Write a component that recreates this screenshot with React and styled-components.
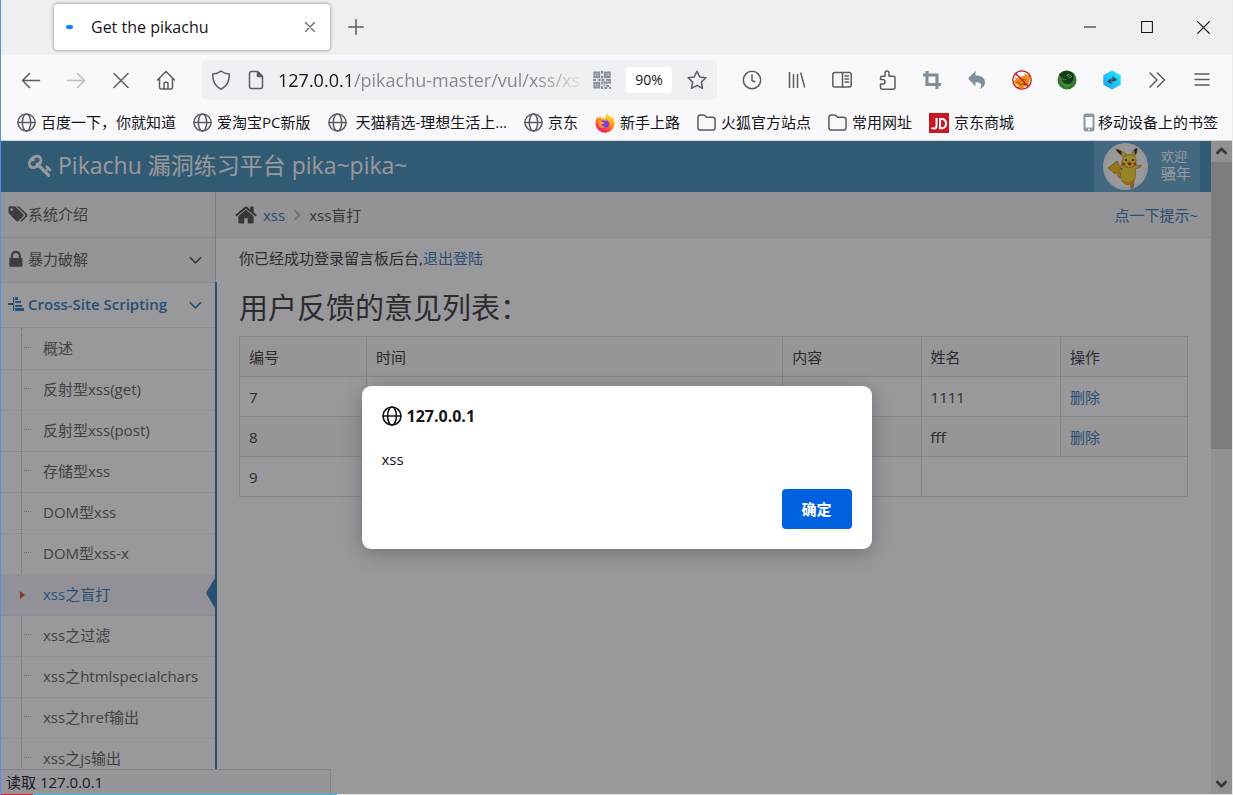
import { useState } from 'react';
import styled, { createGlobalStyle, css } from 'styled-components';

const GlobalStyle = createGlobalStyle`
  * {
    box-sizing: border-box;
  }

  body {
    margin: 0;
    font-family: "Open Sans", "Noto Sans CJK SC", sans-serif;
    font-size: 15px;
    line-height: 20px;
    color: #15141a;
  }

  button, input {
    font: inherit;
  }

  a {
    text-decoration: none;
  }
`;

const Window = styled.div`
  display: flex;
  flex-direction: column;
  height: 100vh;
  overflow: hidden;
  background: #f9f9fb;
  border-left: 1px solid #5a8bf4;
  border-right: 1px solid #e9eaec;
`;

/* browser chrome */

const TabBar = styled.header`
  display: flex;
  align-items: center;
  flex: none;
  height: 55px;
  padding: 0 0 1px 53px;
  background: #efefef;
`;

const Tab = styled.div`
  display: flex;
  align-items: center;
  width: 276px;
  height: 46px;
  padding: 0 8px 0 12px;
  background: #fff;
  border-radius: 4px;
  box-shadow: 0 0 3px 1px rgba(128, 128, 142, 0.6);
`;

const Loader = styled.span`
  width: 7px;
  height: 4px;
  margin-right: 18px;
  border-radius: 2px;
  background: #0a84ff;
`;

const TabTitle = styled.span`
  flex: 1;
  font-size: 16px;
`;

const PlainButton = styled.button`
  display: flex;
  align-items: center;
  justify-content: center;
  padding: 0;
  border: none;
  background: none;
  color: ${props => props.$color || '#5b5b66'};
`;

const TabClose = styled(PlainButton)`
  width: 24px;
  height: 24px;
`;

const NewTab = styled(PlainButton)`
  width: 52px;
  height: 40px;
`;

const WindowButtons = styled.div`
  display: flex;
  margin-left: auto;
`;

const WindowButton = styled(PlainButton)`
  width: 57px;
  height: 40px;
`;

const Toolbar = styled.div`
  display: flex;
  align-items: center;
  flex: none;
  height: 50px;
  padding: 0 8px 0 7px;
`;

const ToolGroup = styled.div`
  display: flex;
`;

const ToolButton = styled(PlainButton)`
  width: 45px;
  height: 40px;
`;

const UrlBar = styled.div`
  display: flex;
  align-items: center;
  flex: 1;
  min-width: 0;
  height: 40px;
  margin: 0 12px 0 14px;
  padding: 0 10px 0 9px;
  background: #f0f0f4;
  border-radius: 5px;
  gap: 15px;
`;

const UrlInput = styled.input`
  flex: 1;
  min-width: 0;
  padding: 0;
  margin: 0 -3px;
  border: none;
  outline: none;
  font-size: 18px;
  line-height: 24px;
  color: transparent;
  background: linear-gradient(to right, #15141a 76px, #85858c 76px, #85858c 85%, rgba(133, 133, 140, 0.1) 100%);
  background-clip: text;
`;

const ZoomLevel = styled.button`
  width: 46px;
  height: 26px;
  padding: 0;
  border: none;
  border-radius: 4px;
  background: #fff;
  font-size: 14px;
  color: #15141a;
`;

const Bookmarks = styled.nav`
  display: flex;
  align-items: center;
  flex: none;
  height: 36px;
  padding: 0 14px 0 16px;
  gap: 17px;
  border-bottom: 1px solid #cfd3d8;
`;

const Bookmark = styled.a`
  display: flex;
  align-items: center;
  gap: ${props => (props.$tight ? '3px' : '5px')};
  margin-left: ${props => (props.$last ? 'auto' : '0')};
  color: #15141a;
  white-space: pre;
`;

const BookmarkText = styled.span`
  padding-bottom: 2px;
`;

/* page */

const Viewport = styled.div`
  position: relative;
  display: flex;
  flex: 1;
  min-height: 0;
`;

const Page = styled.div`
  display: flex;
  flex-direction: column;
  flex: 1;
  min-width: 0;
  background: #fff;
  color: #393939;
`;

const Navbar = styled.div`
  display: flex;
  justify-content: space-between;
  flex: none;
  height: 51px;
  padding: 0 11px 0 27px;
  background: #438eb9;
  color: #fff;
`;

const Brand = styled.a`
  display: flex;
  align-items: center;
  gap: 5px;
  padding-bottom: 3px;
  font-size: 23px;
  line-height: 48px;
  color: #fff;
`;

const UserBox = styled.div`
  display: flex;
  align-items: center;
  width: 106px;
  padding-left: 9px;
  gap: 13px;
  background: #62a8d1;
  line-height: 17px;
`;

const Welcome = styled.div`
  padding-bottom: 4px;
  font-size: 15px;
`;

const Small = styled.small`
  display: block;
  font-size: 13px;
`;

const Body = styled.div`
  display: flex;
  flex: 1;
  min-height: 0;
`;

const Sidebar = styled.aside`
  flex: none;
  width: 215px;
  background: #f2f2f2;
  border-right: 1px solid #ccc;
`;

const NavList = styled.ul`
  list-style: none;
  margin: 0;
  padding: 0;
`;

const NavItem = styled.li`
  position: relative;
  border-bottom: 1px solid #e5e5e5;

  ${props => props.$open && css`
    &::after {
      content: "";
      position: absolute;
      top: -1px;
      right: -2px;
      bottom: 0;
      width: 2px;
      background: #2b7dbc;
    }
  `}
`;

const NavLink = styled.a`
  display: flex;
  align-items: center;
  height: ${props => (props.$first ? '45px' : '44px')};
  padding: 0 12px 2px 7px;
  background: ${props => (props.$open ? '#fff' : '#f8f8f8')};
  color: ${props => (props.$open ? '#2b7dbc' : '#585858')};
  font-weight: ${props => (props.$open ? 600 : 400)};
`;

const NavIcon = styled.span`
  display: flex;
  width: 20px;
`;

const NavText = styled.span`
  flex: 1;
  white-space: nowrap;
`;

const SubList = styled.ul`
  position: relative;
  list-style: none;
  margin: 0;
  padding: 1px 0 0;
  background: #fff;
  border-top: 1px solid #e5e5e5;

  &::before {
    content: "";
    position: absolute;
    top: 0;
    bottom: 0;
    left: 20px;
    border-left: 1px dotted #9dbdd6;
  }
`;

const SubItem = styled.li`
  position: relative;
  border-bottom: 1px dotted #e4e4e4;

  &::before {
    content: "";
    position: absolute;
    top: 18px;
    left: 23px;
    width: 7px;
    border-top: 1px dotted #9dbdd6;
  }

  ${props => props.$active && css`
    background: #f2f2f9;

    &::before {
      top: 16px;
      left: 19px;
      width: 0;
      border: 4px solid transparent;
      border-left: 5px solid #c86139;
      border-right: none;
    }

    &::after {
      content: "";
      position: absolute;
      top: 3px;
      right: 0;
      border: 15px solid transparent;
      border-left: none;
      border-right: 9px solid #2b7dbc;
    }
  `}
`;

const SubLink = styled.a`
  display: block;
  padding: 0 0 2px 42px;
  line-height: 38px;
  white-space: nowrap;
  color: ${props => (props.$active ? '#2b7dbc' : '#616161')};
`;

const Main = styled.main`
  flex: 1;
  min-width: 0;
`;

const Breadcrumbs = styled.div`
  display: flex;
  align-items: center;
  height: 46px;
  padding: 0 13px 0 19px;
  background: #f5f5f5;
  border-bottom: 1px solid #e5e5e5;
`;

const Crumbs = styled.div`
  display: flex;
  align-items: center;
  flex: 1;
  gap: 6px;
  color: #4d4d4d;
`;

const Link = styled.a`
  color: #337ab7;
`;

const Content = styled.div`
  padding: 10px 23px;
`;

const Message = styled.p`
  margin: 0;
  line-height: 20px;
`;

const Title = styled.h2`
  margin: 16px 0 5px;
  font-size: 29px;
  font-weight: 400;
  line-height: 47px;
  color: #393939;
`;

const Table = styled.table`
  width: 100%;
  table-layout: fixed;
  border-collapse: collapse;
  border: 1px solid #ddd;

  tr:nth-child(odd) {
    background: #f9f9f9;
  }
`;

const Col = styled.col`
  width: ${props => props.$width};
`;

const Cell = styled.td`
  height: 40px;
  padding: 0 9px;
  border: 1px solid #ddd;
`;

const Scrollbar = styled.div`
  display: flex;
  flex-direction: column;
  flex: none;
  width: 21px;
  background: #f0f0f0;
  color: #505050;
`;

const ScrollButton = styled(PlainButton)`
  width: 21px;
  height: 21px;
`;

const ScrollTrack = styled.div`
  flex: 1;
`;

const Thumb = styled.div`
  height: 47%;
  background: #cdcdcd;
`;

const StatusPanel = styled.div`
  position: absolute;
  left: 0;
  bottom: 0;
  width: 330px;
  height: 25px;
  padding-left: 5px;
  background: #f9f9fb;
  border-top: 1px solid #dcdce0;
  border-right: 1px solid #dcdce0;
  line-height: 24px;
`;

const Scrim = styled.div`
  position: absolute;
  inset: 0;
  display: flex;
  align-items: center;
  justify-content: center;
  background: rgba(28, 27, 34, 0.45);
`;

const Dialog = styled.div`
  display: flex;
  flex-direction: column;
  width: 510px;
  margin-bottom: 1px;
  padding: 20px;
  background: #fff;
  border-radius: 9px;
  box-shadow: 0 4px 20px rgba(58, 57, 68, 0.4);
`;

const DialogTitle = styled.div`
  display: flex;
  align-items: center;
  gap: 5px;
  font-size: 16px;
  font-weight: 700;
`;

const DialogText = styled.div`
  margin: 23px 0 20px;
`;

const ConfirmButton = styled.button`
  align-self: flex-end;
  width: 70px;
  height: 40px;
  border: none;
  border-radius: 4px;
  background: #0061e0;
  color: #fff;
  font-weight: 700;
`;

const BottomEdge = styled.div`
  flex: none;
  height: 1px;
  background: linear-gradient(to right, #d8222c 32px, #46b4dc 32px, #46b4dc 336px, #e4e4e6 336px);
`;

/* icons */

const Line = ({ size = 20, width = 1.5, children, ...rest }) => (
  <svg width={size} height={size} viewBox="0 0 20 20" fill="none" stroke="currentColor" strokeWidth={width} strokeLinecap="round" strokeLinejoin="round" aria-hidden="true" {...rest}>
    {children}
  </svg>
);

const Awesome = ({ width = 16, height = 16, box = '0 0 1792 1792', d }) => (
  <svg width={width} height={height} viewBox={box} fill="currentColor" aria-hidden="true">
    <path d={d} />
  </svg>
);

const KEY = 'M832 512q0-80-56-136t-136-56-136 56-56 136q0 42 19 83-41-19-83-19-80 0-136 56t-56 136 56 136 136 56 136-56 56-136q0-42-19-83 41 19 83 19 80 0 136-56t56-136zm851 704q0 17-49 66t-66 49q-9 0-28.5-16t-36.5-33-38.5-40-24.5-26l-96 96 220 220q28 28 28 68 0 42-39 81t-81 39q-40 0-68-28l-671-671q-176 131-365 131-163 0-265.5-102.5t-102.5-265.5q0-160 95-313t248-248 313-95q163 0 265.5 102.5t102.5 265.5q0 189-131 365l355 355 96-96q-3-3-26-24.5t-40-38.5-33-36.5-16-28.5q0-17 49-66t66-49q13 0 23 10 6 6 46 44.5t82 79.5 86.5 86 73 78 28.5 41z';
const HOME = 'M1472 992v480q0 26-19 45t-45 19h-384v-384h-256v384h-384q-26 0-45-19t-19-45v-480q0-1 .5-3t.5-3l575-474 575 474q1 2 1 6zm223-69l-62 74q-8 9-21 11h-3q-13 0-21-7l-692-577-692 577q-12 8-24 7-13-2-21-11l-62-74q-8-10-7-23.5t11-21.5l719-599q32-26 76-26t76 26l244 204v-195q0-14 9-23t23-9h192q14 0 23 9t9 23v408l219 182q10 8 11 21.5t-7 23.5z';
const LOCK = 'M640 768h512v-192q0-106-75-181t-181-75-181 75-75 181v192zm832 96v576q0 40-28 68t-68 28h-960q-40 0-68-28t-28-68v-576q0-40 28-68t68-28h32v-192q0-184 132-316t316-132 316 132 132 316v192h32q40 0 68 28t28 68z';
const TAGS = 'M448 448q0-53-37.5-90.5t-90.5-37.5-90.5 37.5-37.5 90.5 37.5 90.5 90.5 37.5 90.5-37.5 37.5-90.5zm1067 576q0 53-37 90l-491 492q-39 37-91 37-53 0-90-37l-715-716q-38-37-64.5-101t-26.5-117v-416q0-52 38-90t90-38h416q53 0 117 26.5t102 64.5l715 714q37 39 37 91zm384 0q0 53-37 90l-491 492q-39 37-91 37-36 0-59-14t-53-45l470-470q37-37 37-90 0-52-37-91l-715-714q-38-38-102-64.5t-117-26.5h224q53 0 117 26.5t102 64.5l715 714q37 39 37 91z';

const GlobeIcon = ({ color = '#5b5b66' }) => (
  <Line size={19} color={color} width={1.6}>
    <circle cx="10" cy="10" r="9" />
    <ellipse cx="10" cy="10" rx="4.4" ry="9" />
    <path d="M1 10h18" />
  </Line>
);

const FolderIcon = () => (
  <Line size={19} color="#5b5b66" width={1.6}>
    <path d="M1 15.5v-11A2.5 2.5 0 0 1 3.500 2h3.200c.6 0 1.100.2 1.500.6L10 4.500h6.500A2.500 2.500 0 0 1 19 7v8.500a2.500 2.500 0 0 1-2.500 2.500h-13A2.500 2.500 0 0 1 1 15.500z" />
  </Line>
);

const FirefoxIcon = () => (
  <svg width="20" height="20" viewBox="0 0 20 20" aria-hidden="true">
    <defs>
      <linearGradient id="fox" x1="0.8" y1="0" x2="0.3" y2="1">
        <stop offset="0" stopColor="#fff24a" />
        <stop offset="0.45" stopColor="#ff980e" />
        <stop offset="0.8" stopColor="#ff3647" />
        <stop offset="1" stopColor="#e31587" />
      </linearGradient>
    </defs>
    <path d="M12.500.3c.4 2 2.500 3 3.600 4.400.5-.3.600-1 .4-1.700 2 1.800 3.200 4.600 3 7.500-.3 5.200-4.400 9.200-9.500 9.200S.6 15.700.5 10.600C.4 8 1.200 5.300 2.800 3.500c0 .9.200 1.500.6 2C4 4.400 5 3.600 5.700 3.300c-.1.900 0 1.500.3 2 1.600-.3 3 .2 3.900 1 .3-2.300 1.100-4.500 2.600-6z" fill="url(#fox)" />
    <path d="M6.200 7.800c1.400-.9 2.800-.7 3.800.2 1-1 3-.5 3.800.8 1.100 2 .4 4.200-1 5.200-1.900 1.300-4.600 1-5.900-.8-.6-.8-.7-1.800-.4-2.300.9.500 2 .3 3-.6-1.500 0-2.900-.9-3.300-2.500z" fill="#7542e5" />
    <path d="M3 8.500c1.300-.9 3-.7 4 .3l2.500.7c-.5 1.500-2 1.500-2.800 1.800.3 1.700 2 3 4 2.500-2 2-5.600 1.500-7-1z" fill="#ffbd2f" opacity="0.65" />
  </svg>
);

const JdIcon = () => (
  <svg width="20" height="20" viewBox="0 0 20 20" fill="none" stroke="#fff" strokeWidth="2" aria-hidden="true">
    <rect width="20" height="20" fill="#c91623" stroke="none" />
    <path d="M7.500 5v8c0 1.600-.9 2.500-2.500 2.500-1 0-1.700-.2-2.500-.6M11 6v9.200h1.800c2.800 0 4.200-1.700 4.200-4.600S15.600 6 12.800 6z" />
  </svg>
);

const PhoneIcon = () => (
  <svg width="12" height="19" viewBox="0 0 12 19" aria-hidden="true">
    <rect x="0.500" y="0.500" width="11" height="18" rx="2" fill="#8f99a3" />
    <rect x="2.500" y="4" width="7" height="10.500" fill="#fff" />
    <circle cx="6" cy="16.500" r="0.900" fill="#fff" />
  </svg>
);

const QrIcon = () => (
  <svg width="18" height="18" viewBox="0 0 19 19" fill="none" stroke="#84919e" strokeWidth="2.200" aria-hidden="true">
    <path d="M1.500 1.500h5v5h-5zM12.500 1.500h5v5h-5zM1.500 12.500h5v5h-5z" />
    <path d="M3 4h2M14 4h2M3 15h2" />
    <path d="M9.500 0v3M9.500 5v3M0 9.500h3M5 9.500h3M9 9.500h3M14 9.500h5M9.500 11v3M11 12h3M14.500 11v3M16 12h3M11 15h2M9.500 16v3M14 16h3M12 18h3M17 18h2" />
  </svg>
);

const BlockIcon = () => (
  <svg width="20" height="20" viewBox="0 0 20 20" aria-hidden="true">
    <path d="M2 7l4 1.500 1.500-1.700 5-1L13 3l1.700 2.300L18 5l-.3 5-1.700 5-5 3H5l1.500-3-3-.5-1.500-3 2-2z" fill="#f08a10" />
    <path d="M5 12l3 1M11 9l2 1M8 15l3-1 3 1" stroke="#8a3b06" fill="none" />
    <circle cx="10" cy="10" r="9.200" fill="none" stroke="#c4161c" strokeWidth="1.300" />
    <path d="M3.500 3.500l13 13" stroke="#c4161c" strokeWidth="1.300" />
  </svg>
);

const GreenIcon = () => (
  <svg width="20" height="20" viewBox="0 0 20 20" aria-hidden="true">
    <circle cx="10" cy="10" r="9.500" fill="#357a31" />
    <path d="M2 4.500C5 1 9 .5 11 1l4 1.500C18 5 17 12 13 13.500c-4 1-8-1-8-4 2 1.500 4 1 5-.5-3 .5-6-1-8-4.500z" fill="#123d18" />
    <path d="M10 5c2-1 4 0 4.500 2-1 1-3 .5-4.500-2zM4 12c1.500 3 5 4.500 9 3.500" fill="none" stroke="#5da04e" />
  </svg>
);

const HexIcon = () => (
  <svg width="20" height="20" viewBox="0 0 20 20" aria-hidden="true">
    <defs>
      <linearGradient id="hex" x1="1" y1="0" x2="0" y2="1">
        <stop offset="0" stopColor="#1af0f5" />
        <stop offset="1" stopColor="#1e9bff" />
      </linearGradient>
    </defs>
    <path d="M10 .5l8.700 4.800v9.500L10 19.500l-8.700-4.700V5.300z" fill="url(#hex)" />
    <path d="M10.500 6l5 4-5.500 2zM9.500 8v6.500L5 11.500z" fill="#344c58" />
  </svg>
);

const PikachuAvatar = () => (
  <svg width="45" height="47" viewBox="0 0 45 47" aria-hidden="true">
    <ellipse cx="22.500" cy="23.500" rx="22.500" ry="23.500" fill="#fff" />
    <ellipse cx="22.500" cy="23.500" rx="20.500" ry="21.500" fill="none" stroke="#dbe5f0" strokeWidth="0.600" />
    <g stroke="#a4720b" strokeWidth="0.600" strokeLinejoin="round">
      <path d="M5 25l9-7 4 8-2 2 3 6-3 1-3-6-1 2z" fill="#f2bd16" />
      <path d="M27 38l4 1-1 6h-2z" fill="#f29a18" />
      <path d="M21 14c-4-2-7-5-8-8 4 1 8 3 11 6zM29 11c0-3 2-5 5-6 1 4-1 7-3 9z" fill="#fbdc28" />
      <path d="M19 25c-2 4-2 9 0 13 3 3 9 3 12 0 2-4 2-8 1-12l6-2v-2l-5 1-1-4H20l-3 5 2 3z" fill="#fbdc28" />
      <path d="M20 15c2-4 10-5 12-1 2 3 1 8-2 10-3 1-7 1-9-1-3-2-3-5-1-8z" fill="#ffe02c" />
    </g>
    <path d="M13 6l5 2 1 4c-3-1-5-4-6-6zM34 5l-3 2 1 5c2-2 2-5 2-7z" fill="#2b2622" />
    <path d="M19 36c3 4 9 4 12 0-1 5-3 6-6 6s-6-2-6-6z" fill="#f2a61b" />
    <circle cx="23" cy="17" r="1.100" fill="#2b2622" />
    <circle cx="30" cy="17" r="1.100" fill="#2b2622" />
    <circle cx="20.500" cy="21" r="1.600" fill="#e23d2a" />
    <circle cx="32" cy="21" r="1.600" fill="#e23d2a" />
    <path d="M24.500 19.500h4c0 4-4 4-4 0z" fill="#b52e34" />
  </svg>
);

const tools = [
  { label: 'history', icon: <Line><circle cx="10" cy="10" r="8.700" /><path d="M10 5v5.500l3 1.200" /></Line> },
  { label: 'library', icon: <Line><path d="M2.500 2v16M6.500 4v14M10.500 4v14M13.700 2.500l4 15" strokeLinecap="butt" /></Line> },
  { label: 'sidebar', icon: <Line><rect x="0.800" y="2.500" width="18.400" height="14.500" rx="2" /><path d="M10.500 2.500V17M13 6h3.500M13 9h3.500M13 12h3.500" /></Line> },
  { label: 'extensions', icon: <Line><path d="M5.500 19.200a2 2 0 0 1-2-2V14h2.300a2.200 2.200 0 0 0 0-4.400H3.500V7.800c0-1 .7-1.500 1.500-1.500h3V3a2 2 0 0 1 4 0v3.300h4.500c1 0 1.500.6 1.500 1.500v9.400a2 2 0 0 1-2 2z" /></Line> },
  { label: 'crop', color: '#7f8c99', icon: <Line width={3.200} strokeLinecap="butt" strokeLinejoin="miter"><path d="M5 1v13.500h14M1 5h14v14" /></Line> },
  { label: 'undo', color: '#7f8c99', icon: <svg width="20" height="20" viewBox="0 0 20 20" fill="currentColor" aria-hidden="true"><path d="M8.500 1v4.500c6 0 9.500 2.500 9.500 7 0 3-1.500 5-5.500 6.500 2.500-2.700 3-7-4-7v4.200L1 8.500z" /></svg> },
  { label: 'block', icon: <BlockIcon /> },
  { label: 'agent', icon: <GreenIcon /> },
  { label: 'proxy', icon: <HexIcon /> },
  { label: 'more', icon: <Line><path d="M3 3l7 7-7 7M10.500 3l7 7-7 7" /></Line> },
  { label: 'menu', icon: <Line><path d="M3 4h14M3 9.500h14M3 15h14" /></Line> },
];

const bookmarks = [
  { text: '百度一下，你就知道', icon: <GlobeIcon /> },
  { text: '爱淘宝PC新版', icon: <GlobeIcon /> },
  { text: ' 天猫精选-理想生活上...', icon: <GlobeIcon /> },
  { text: '京东', icon: <GlobeIcon /> },
  { text: '新手上路', icon: <FirefoxIcon /> },
  { text: '火狐官方站点', icon: <FolderIcon /> },
  { text: '常用网址', icon: <FolderIcon /> },
  { text: '京东商城', icon: <JdIcon /> },
];

const submenu = [
  '概述',
  '反射型xss(get)',
  '反射型xss(post)',
  '存储型xss',
  'DOM型xss',
  'DOM型xss-x',
  'xss之盲打',
  'xss之过滤',
  'xss之htmlspecialchars',
  'xss之href输出',
  'xss之js输出',
];

const AngleDown = () => (
  <Line size={15} width={2}><path d="M3 7.500l7 7 7-7" /></Line>
);

export default function App() {
  const [url, setUrl] = useState('127.0.0.1/pikachu-master/vul/xss/xss');

  return (
    <Window>
      <GlobalStyle />
      <TabBar>
        <Tab>
          <Loader />
          <TabTitle>Get the pikachu</TabTitle>
          <TabClose aria-label="close tab">
            <Line size={10} width={2.200}><path d="M1 1l18 18M19 1L1 19" /></Line>
          </TabClose>
        </Tab>
        <NewTab aria-label="new tab">
          <Line size={16} width={1.900}><path d="M10 1v18M1 10h18" /></Line>
        </NewTab>
        <WindowButtons>
          <WindowButton $color="#111" aria-label="minimize"><Line size={12} width={1.700}><path d="M0 10h20" /></Line></WindowButton>
          <WindowButton $color="#111" aria-label="maximize"><Line size={12} width={1.700}><rect x="1" y="1" width="18" height="18" /></Line></WindowButton>
          <WindowButton $color="#111" aria-label="close"><Line size={13} width={1.800}><path d="M1 1l18 18M19 1L1 19" /></Line></WindowButton>
        </WindowButtons>
      </TabBar>

      <Toolbar>
        <ToolGroup>
          <ToolButton aria-label="back"><Line><path d="M18.500 10.500h-17M8.500 3.500l-7 7 7 7" /></Line></ToolButton>
          <ToolButton $color="#bdbdc3" aria-label="forward"><Line><path d="M1.500 10.500h17M11.500 3.500l7 7-7 7" /></Line></ToolButton>
          <ToolButton aria-label="stop"><Line><path d="M3 3.500l14 14M17 3.500l-14 14" /></Line></ToolButton>
          <ToolButton aria-label="home"><Line><path d="M1.500 10L10 1.500l8.500 8.500M3.500 8.500v8.500c0 1.300.7 2 2 2h9c1.300 0 2-.7 2-2V8.500M8 19v-5.500c0-.7.5-1.200 1.200-1.200h1.600c.7 0 1.200.5 1.200 1.200V19" /></Line></ToolButton>
        </ToolGroup>
        <UrlBar>
          <Line color="#5b5b66"><path d="M10 1c-2 1.800-5 2.800-8.300 3C1.500 11 4 16.500 10 19.200c6-2.700 8.500-8.200 8.300-15.200-3.300-.2-6.300-1.200-8.300-3z" /></Line>
          <Line color="#5b5b66"><path d="M11.500 1.500h-6a2 2 0 0 0-2 2v13a2 2 0 0 0 2 2h9a2 2 0 0 0 2-2v-10z" /><path d="M11.500 1.500v5h5z" fill="currentColor" /></Line>
          <UrlInput aria-label="address" value={url} onChange={e => setUrl(e.target.value)} />
          <QrIcon />
          <ZoomLevel>90%</ZoomLevel>
          <Line color="#5b5b66"><path d="M10 1.200l2.700 5.700 6.200.8-4.500 4.300 1.100 6.300L10 15.300l-5.500 3 1.100-6.300L1.100 7.700l6.200-.8z" /></Line>
        </UrlBar>
        <ToolGroup>
          {tools.map(tool => (
            <ToolButton key={tool.label} $color={tool.color} aria-label={tool.label}>{tool.icon}</ToolButton>
          ))}
        </ToolGroup>
      </Toolbar>

      <Bookmarks>
        {bookmarks.map(item => (
          <Bookmark key={item.text} href="#">
            {item.icon}
            <BookmarkText>{item.text}</BookmarkText>
          </Bookmark>
        ))}
        <Bookmark href="#" $last $tight>
          <PhoneIcon />
          <BookmarkText>移动设备上的书签</BookmarkText>
        </Bookmark>
      </Bookmarks>

      <Viewport>
        <Page>
          <Navbar>
            <Brand href="#">
              <Awesome width={25} height={25} d={KEY} />
              Pikachu 漏洞练习平台 pika~pika~
            </Brand>
            <UserBox>
              <PikachuAvatar />
              <Welcome>
                <Small>欢迎</Small>
                骚年
              </Welcome>
            </UserBox>
          </Navbar>
          <Body>
            <Sidebar>
              <NavList>
                <NavItem>
                  <NavLink href="#" $first>
                    <NavIcon><Awesome width={20} height={18} box="0 0 1900 1792" d={TAGS} /></NavIcon>
                    <NavText>系统介绍</NavText>
                  </NavLink>
                </NavItem>
                <NavItem>
                  <NavLink href="#">
                    <NavIcon><Awesome width={17} height={18} box="200 128 1500 1450" d={LOCK} /></NavIcon>
                    <NavText>暴力破解</NavText>
                    <AngleDown />
                  </NavLink>
                </NavItem>
                <NavItem $open>
                  <NavLink href="#" $open>
                    <NavIcon>
                      <svg width="17" height="16" viewBox="0 0 17 16" fill="currentColor" aria-hidden="true">
                        <path d="M0 7h5V1h1v14H5V9H0zM7 1h3v3H7zM7 5h6v2H7zM7 9h7v2H7zM7 12h9v3H7z" />
                      </svg>
                    </NavIcon>
                    <NavText>Cross-Site Scripting</NavText>
                    <AngleDown />
                  </NavLink>
                  <SubList>
                    {submenu.map(text => (
                      <SubItem key={text} $active={text === 'xss之盲打'}>
                        <SubLink href="#" $active={text === 'xss之盲打'}>{text}</SubLink>
                      </SubItem>
                    ))}
                  </SubList>
                </NavItem>
              </NavList>
            </Sidebar>
            <Main>
              <Breadcrumbs>
                <Crumbs>
                  <Awesome width={22} height={22} box="64 100 1664 1600" d={HOME} />
                  <Link href="#">xss</Link>
                  <Line size={12} width={3} color="#b2b6bf"><path d="M7 3l7 7-7 7" /></Line>
                  <span>xss盲打</span>
                </Crumbs>
                <Link href="#">点一下提示~</Link>
              </Breadcrumbs>
              <Content>
                <Message>你已经成功登录留言板后台,<Link href="#">退出登陆</Link></Message>
                <Title>用户反馈的意见列表：</Title>
                <Table>
                  <colgroup>
                    <Col $width="13.4%" />
                    <Col $width="43.9%" />
                    <Col $width="14.6%" />
                    <Col $width="14.7%" />
                    <Col $width="13.4%" />
                  </colgroup>
                  <tbody>
                    <tr>
                      <Cell>编号</Cell>
                      <Cell>时间</Cell>
                      <Cell>内容</Cell>
                      <Cell>姓名</Cell>
                      <Cell>操作</Cell>
                    </tr>
                    <tr>
                      <Cell>7</Cell>
                      <Cell />
                      <Cell />
                      <Cell>1111</Cell>
                      <Cell><Link href="#">删除</Link></Cell>
                    </tr>
                    <tr>
                      <Cell>8</Cell>
                      <Cell />
                      <Cell />
                      <Cell>fff</Cell>
                      <Cell><Link href="#">删除</Link></Cell>
                    </tr>
                    <tr>
                      <Cell>9</Cell>
                      <Cell />
                      <Cell />
                      <Cell colSpan={2} />
                    </tr>
                  </tbody>
                </Table>
              </Content>
            </Main>
          </Body>
        </Page>
        <Scrollbar>
          <ScrollButton $color="#505050" aria-label="scroll up"><Line size={11} width={5} strokeLinecap="butt"><path d="M1 14l9-9 9 9" /></Line></ScrollButton>
          <ScrollTrack><Thumb /></ScrollTrack>
          <ScrollButton $color="#505050" aria-label="scroll down"><Line size={11} width={5} strokeLinecap="butt"><path d="M1 6l9 9 9-9" /></Line></ScrollButton>
        </Scrollbar>
        <StatusPanel>读取 127.0.0.1</StatusPanel>
        <Scrim>
          <Dialog role="dialog" aria-labelledby="dialog-title">
            <DialogTitle id="dialog-title">
              <Line size={20} width={1.600}>
                <circle cx="10" cy="10" r="9" />
                <ellipse cx="10" cy="10" rx="4.400" ry="9" />
                <path d="M1 10h18" />
              </Line>
              127.0.0.1
            </DialogTitle>
            <DialogText>xss</DialogText>
            <ConfirmButton>确定</ConfirmButton>
          </Dialog>
        </Scrim>
      </Viewport>
      <BottomEdge />
    </Window>
  );
}
